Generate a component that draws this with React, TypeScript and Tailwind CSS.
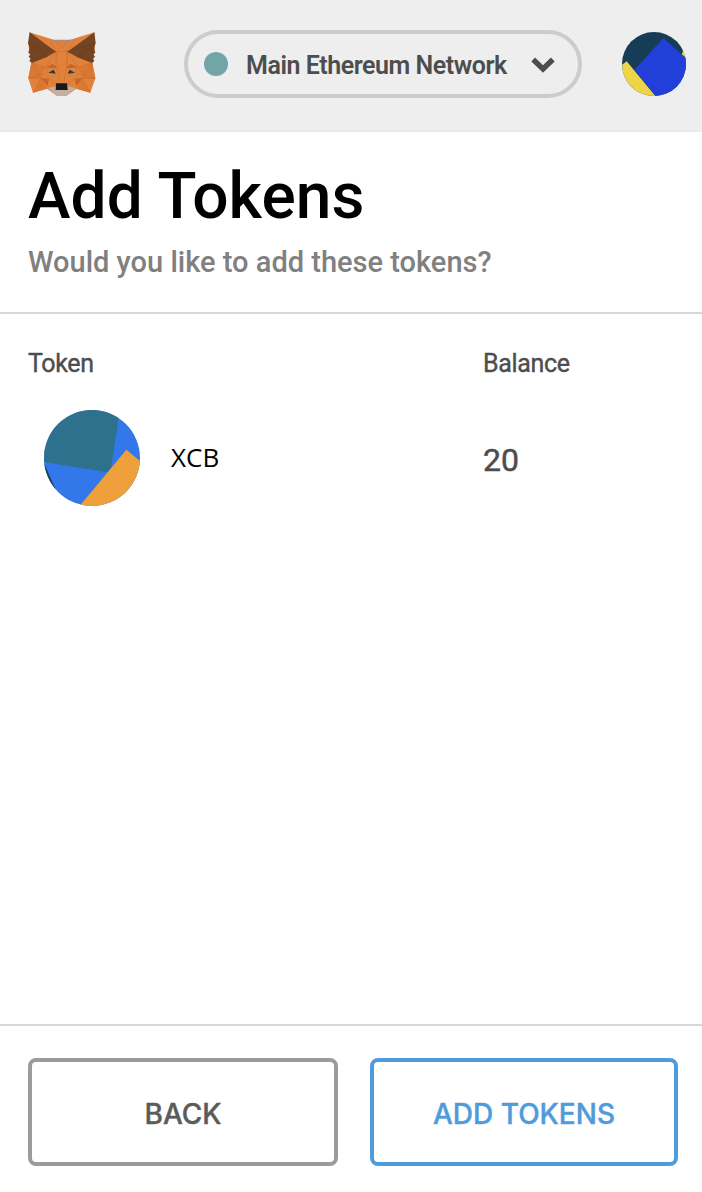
import React from "react";

function FoxLogo() {
  return (
    <svg className="h-20 w-21 shrink-0" viewBox="0 0 252 240" aria-label="Fox">
      <path fill="#e0823b" d="M29 25 L103 48 H149 L223 25 L225 70 L217 116 L226 163 L211 206 L169 194 L139 215 H111 L81 194 L39 206 L25 163 L34 116 L26 70Z" />
      <path fill="#a98d7b" d="M88 47H164L150 51H102Z" />
      <path fill="#db7830" d="M34 116 L77 130 L63 163 H25Z M217 116 L174 130 L188 163 H226Z M81 194 L63 163 L39 206Z M169 194 L188 163 L211 206Z" />
      <path fill="#c96328" d="M63 163 L87 166 L82 186Z M188 163 L164 166 L169 186Z M77 130 L98 120 L112 132Z M174 130 L152 120 L139 132Z" />
      <path fill="#744423" d="M29 25 L108 83 L80 99 L36 117 L28 111 L32 104 L26 98 L31 91 L25 86 L29 72 L24 57Z M223 25 L142 83 L171 99 L216 117 L223 111 L219 104 L225 98 L220 91 L226 86 L222 72 L227 57Z" />
      <path fill="#c4afa0" d="M84 192 L108 187 L108 197 H142 L142 187 L167 192 L139 215 H111Z" />
      <path fill="#17191b" d="M108 178H141L143 198H107Z" />
      <path fill="#27394a" d="M85 146 L101 137 L107 149Z M165 146 L149 137 L143 149Z" />
      <path fill="none" stroke="#a75a2c" strokeWidth="1.3" opacity=".55" d="M88 47 L108 83 L107 130 M164 47 L142 83 L143 130 M108 83 L149 48 M102 48 L142 83 M108 83H142 M108 83L77 130L36 117L80 99 M142 83L174 130L216 117L171 99 M108 83L112 130L119 178 M142 83L139 130L131 178 M77 130L85 146L25 163 M174 130L165 146L226 163 M34 116L63 163L39 206 M217 116L188 163L211 206 M25 163H87L107 181M226 163H164L143 181 M77 130H112 M174 130H139" />
      <path fill="none" stroke="#4d321f" strokeWidth="1.2" opacity=".4" d="M29 25L80 99L24 57L108 83M223 25L171 99L227 57L142 83M29 72L80 99L28 111M222 72L171 99L223 111" />
    </svg>
  );
}

function AccountAvatar() {
  return (
    <svg className="size-16 shrink-0" viewBox="36 36 192 192">
      <defs><clipPath id="account"><circle cx="132" cy="132" r="96" /></clipPath></defs>
      <g clipPath="url(#account)">
        <path fill="#163c58" d="M36 36H228V228H36Z" />
        <path fill="#edd54a" d="M20 146L50 124L142 235H20Z" />
        <path fill="#f5ef3d" d="M219 90H236V120L216 104Z" />
        <path fill="#233fd9" d="M160 54L236 121V240H146L74 149Z" />
      </g>
    </svg>
  );
}

function TokenAvatar() {
  return (
    <svg className="size-24 shrink-0" viewBox="72 210 288 288">
      <defs><clipPath id="token"><circle cx="216" cy="354" r="144" /></clipPath></defs>
      <g clipPath="url(#token)">
        <path fill="#3278ea" d="M72 210H360V498H72Z" />
        <path fill="#17445c" d="M68 360L108 450H68Z" />
        <path fill="#2e718c" d="M60 200H301L273 385L262 397L60 364Z" />
        <path fill="#eea03a" d="M319 329L370 371V505H173Z" />
      </g>
    </svg>
  );
}

export default function App() {
  return (
    <div className="flex h-[1192px] w-[702px] flex-col overflow-hidden bg-white font-['Roboto',sans-serif] font-medium text-[#4d4d4d]">
      <header className="flex h-[132px] shrink-0 items-start border-b-2 border-[#ebebeb] bg-[#eee] pl-5">
        <div className="pt-6"><FoxLogo /></div>
        <button className="mt-[30px] ml-20 flex h-[68px] w-[398px] items-center rounded-full border-4 border-[#ccc] pl-4">
          <span className="size-6 rounded-full bg-[#72a5a8]" />
          <span className="ml-[18px] w-[270px] pt-[3px] text-left text-[25px] leading-8 font-semibold tracking-[-0.46px] whitespace-nowrap">Main Ethereum Network</span>
          <svg className="ml-[15px] h-4 w-6 translate-y-px" viewBox="0 0 24 16">
            <path d="M2.2 2.5L12 12L21.8 2.5" fill="none" stroke="#4d4d4d" strokeWidth="5.4" />
          </svg>
        </button>
        <div className="mt-8 ml-10"><AccountAvatar /></div>
      </header>
      <section className="h-[182px] shrink-0 border-b-2 border-[#d2d8dd] px-7 pt-[27px]">
        <h1 className="text-[64px] leading-[75px] tracking-[0.1px] text-black">Add Tokens</h1>
        <p className="mt-[11px] text-[29px] leading-[34px] text-[#808080]">Would you like to add these tokens?</p>
      </section>
      <main className="flex-1 px-7 pt-[35px]">
        <div className="grid grid-cols-[455px_1fr] text-[25px] leading-[30px] font-normal tracking-[-0.35px] [-webkit-text-stroke:0.4px_#4d4d4d]">
          <span>Token</span>
          <span>Balance</span>
        </div>
        <div className="mt-[31px] grid h-24 grid-cols-[455px_1fr] items-center">
          <div className="flex items-center pl-4">
            <TokenAvatar />
            <span className="-mt-px ml-[31px] font-['Open_Sans',sans-serif] text-[26px] font-normal text-black">XCB</span>
          </div>
          <span className="pt-1 text-[32px] font-normal [-webkit-text-stroke:0.5px_#4d4d4d]">20</span>
        </div>
      </main>
      <footer className="flex h-[168px] shrink-0 gap-8 border-t-2 border-[#d2d8dd] pt-8 pr-6 pl-7">
        <button className="h-[108px] w-[310px] rounded-lg border-4 border-[#9b9b9b] pt-1 font-['Inter',sans-serif] text-[28px] text-[#5b5b5b] [-webkit-text-stroke:0.4px_#5b5b5b]">BACK</button>
        <button className="h-[108px] w-[308px] rounded-lg border-4 border-[#4f9bdc] pt-1 font-['Inter',sans-serif] text-[28px] text-[#4f9bdc] [-webkit-text-stroke:0.4px_#4f9bdc]">ADD TOKENS</button>
      </footer>
    </div>
  );
}
